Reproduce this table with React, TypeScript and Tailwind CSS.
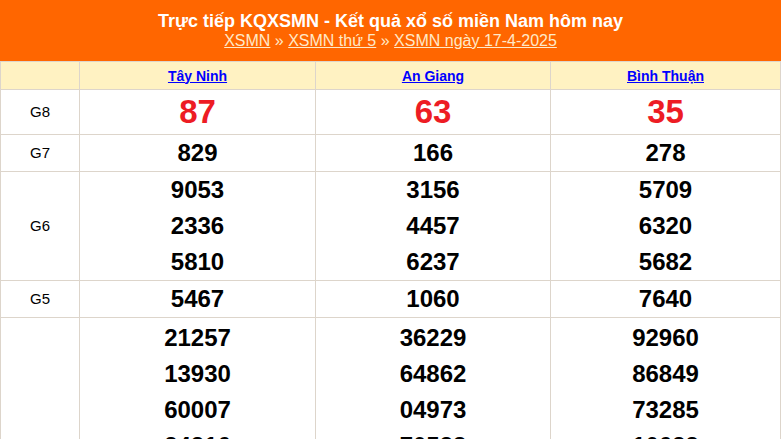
const provinces = ['Tây Ninh', 'An Giang', 'Bình Thuận'];

const rows: { label: string; values: string[][]; big?: boolean; pad?: boolean }[] = [
  { label: 'G8', values: [['87'], ['63'], ['35']], big: true },
  { label: 'G7', values: [['829'], ['166'], ['278']] },
  {
    label: 'G6',
    values: [
      ['9053', '2336', '5810'],
      ['3156', '4457', '6237'],
      ['5709', '6320', '5682'],
    ],
  },
  { label: 'G5', values: [['5467'], ['1060'], ['7640']] },
  {
    label: 'G4',
    pad: true,
    values: [
      ['21257', '13930', '60007', '24216', '50331', '77412', '18645'],
      ['36229', '64862', '04973', '70538', '12097', '45580', '93314'],
      ['92960', '86849', '73285', '10633', '58172', '29406', '61758'],
    ],
  },
];

export default function App() {
  return (
    <div className="w-[781px] h-[439px] overflow-hidden bg-white font-['Liberation_Sans',Arial,sans-serif]">
      {/* Header */}
      <div className="h-[61px] bg-[#ff6600] flex flex-col items-center pt-[10px]">
        <h1 className="text-white font-bold text-[18px] leading-[22px]">
          Trực tiếp KQXSMN - Kết quả xổ số miền Nam hôm nay
        </h1>
        <div className="text-[16px] leading-[20px] text-[#ffe9c8] mt-[-1px]">
          <a href="#" className="underline">XSMN</a>
          {' » '}
          <a href="#" className="underline">XSMN thứ 5</a>
          {' » '}
          <a href="#" className="underline">XSMN ngày 17-4-2025</a>
        </div>
      </div>

      {/* Results table */}
      <table className="w-full table-fixed border-collapse">
        <colgroup>
          <col className="w-[79px]" />
          <col className="w-[236px]" />
          <col className="w-[235px]" />
          <col />
        </colgroup>
        <thead>
          <tr className="bg-[#fff2c2] h-[28px]">
            <th className="border border-[#ddd5cb]" />
            {provinces.map((p) => (
              <th key={p} className="border border-[#ddd5cb] text-center">
                <a href="#" className="text-[14px] font-bold text-[#0000ff] underline">
                  {p}
                </a>
              </th>
            ))}
          </tr>
        </thead>
        <tbody>
          {rows.map((r) => (
            <tr key={r.label}>
              <td className="border border-[#ddd5cb] text-center text-[15px] text-black">
                {r.label}
              </td>
              {r.values.map((nums, i) => (
                <td
                  key={i}
                  className={`border border-[#ddd5cb] text-center align-top ${r.pad ? 'pt-[2px]' : ''}`}
                >
                  {nums.map((n, j) =>
                    r.big ? (
                      <div key={j} className="text-[33px] leading-[44px] font-bold text-[#ed1c24]">
                        {n}
                      </div>
                    ) : (
                      <div key={j} className="text-[24px] leading-[36px] font-bold text-black">
                        {n}
                      </div>
                    ),
                  )}
                </td>
              ))}
            </tr>
          ))}
        </tbody>
      </table>
    </div>
  );
}
